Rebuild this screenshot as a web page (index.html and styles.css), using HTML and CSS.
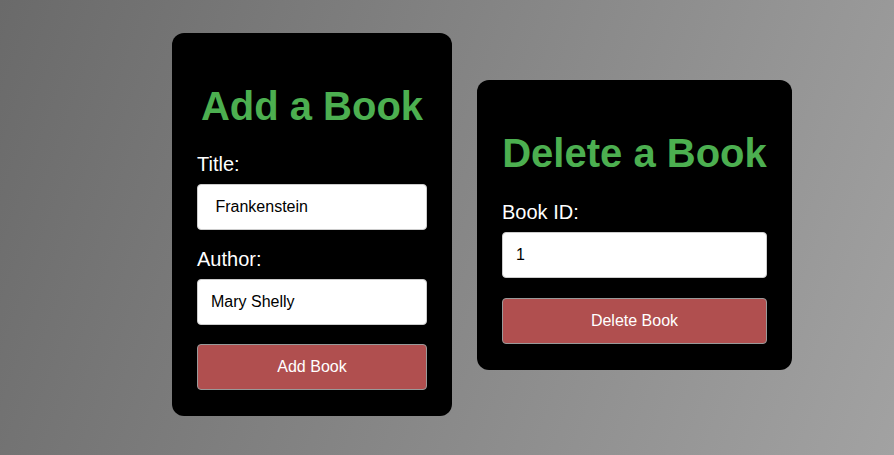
FILE: index.html
```html
<!DOCTYPE html>
<html lang="en">
<head>
<meta charset="utf-8">
<title>Books</title>
<link rel="stylesheet" href="styles.css">
</head>
<body>
<main class="page">
  <section class="card card-add">
    <h2 class="card-title">Add a Book</h2>
    <label class="field-label" for="title">Title:</label>
    <input class="field-input" id="title" type="text" value=" Frankenstein">
    <label class="field-label" for="author">Author:</label>
    <input class="field-input" id="author" type="text" value="Mary Shelly">
    <button class="btn" type="button">Add Book</button>
  </section>
  <section class="card card-delete">
    <h2 class="card-title">Delete a Book</h2>
    <label class="field-label" for="bookid">Book ID:</label>
    <input class="field-input" id="bookid" type="text" value="1">
    <button class="btn" type="button">Delete Book</button>
  </section>
</main>
</body>
</html>
```
FILE: styles.css
```css
* { box-sizing: border-box; }
html, body { margin: 0; height: 100%; }
body {
  font-family: "Liberation Sans", Arial, sans-serif;
  background: linear-gradient(110deg, #6a6a6a 0%, #a2a2a2 100%);
}
.page {
  min-height: 100vh;
  display: flex;
  justify-content: center;
  align-items: center;
  gap: 25px;
  padding: 0 0 6px 70px;
}
.card {
  background: #000;
  border-radius: 12px;
  padding: 25px 25px 26px;
  display: flex;
  flex-direction: column;
}
.card-add { width: 280px; }
.card-delete { width: 315px; }
.card-title {
  margin: 25px 0 24px;
  font-size: 40px;
  font-weight: bold;
  line-height: 46px;
  color: #4caf50;
  text-align: center;
  white-space: nowrap;
}
.card-delete .card-title { margin-bottom: 25px; }
.field-label {
  display: block;
  color: #fff;
  font-size: 20px;
  line-height: 23px;
  margin-bottom: 8px;
}
.field-input {
  display: block;
  width: 100%;
  height: 46px;
  margin: 0 0 18px;
  padding: 0 13px;
  border: 1px solid #ccc;
  border-radius: 4px;
  background: #fff;
  color: #000;
  font-family: "Liberation Sans", Arial, sans-serif;
  font-size: 16px;
}
.field-input + .btn { margin-top: 1px; }
.card-delete .field-input + .btn { margin-top: 2px; }
.btn {
  display: block;
  width: 100%;
  height: 46px;
  border: 1px solid #999;
  border-radius: 4px;
  background: #b04f4f;
  color: #fff;
  font-family: "Liberation Sans", Arial, sans-serif;
  font-size: 16px;
  cursor: pointer;
}
```
